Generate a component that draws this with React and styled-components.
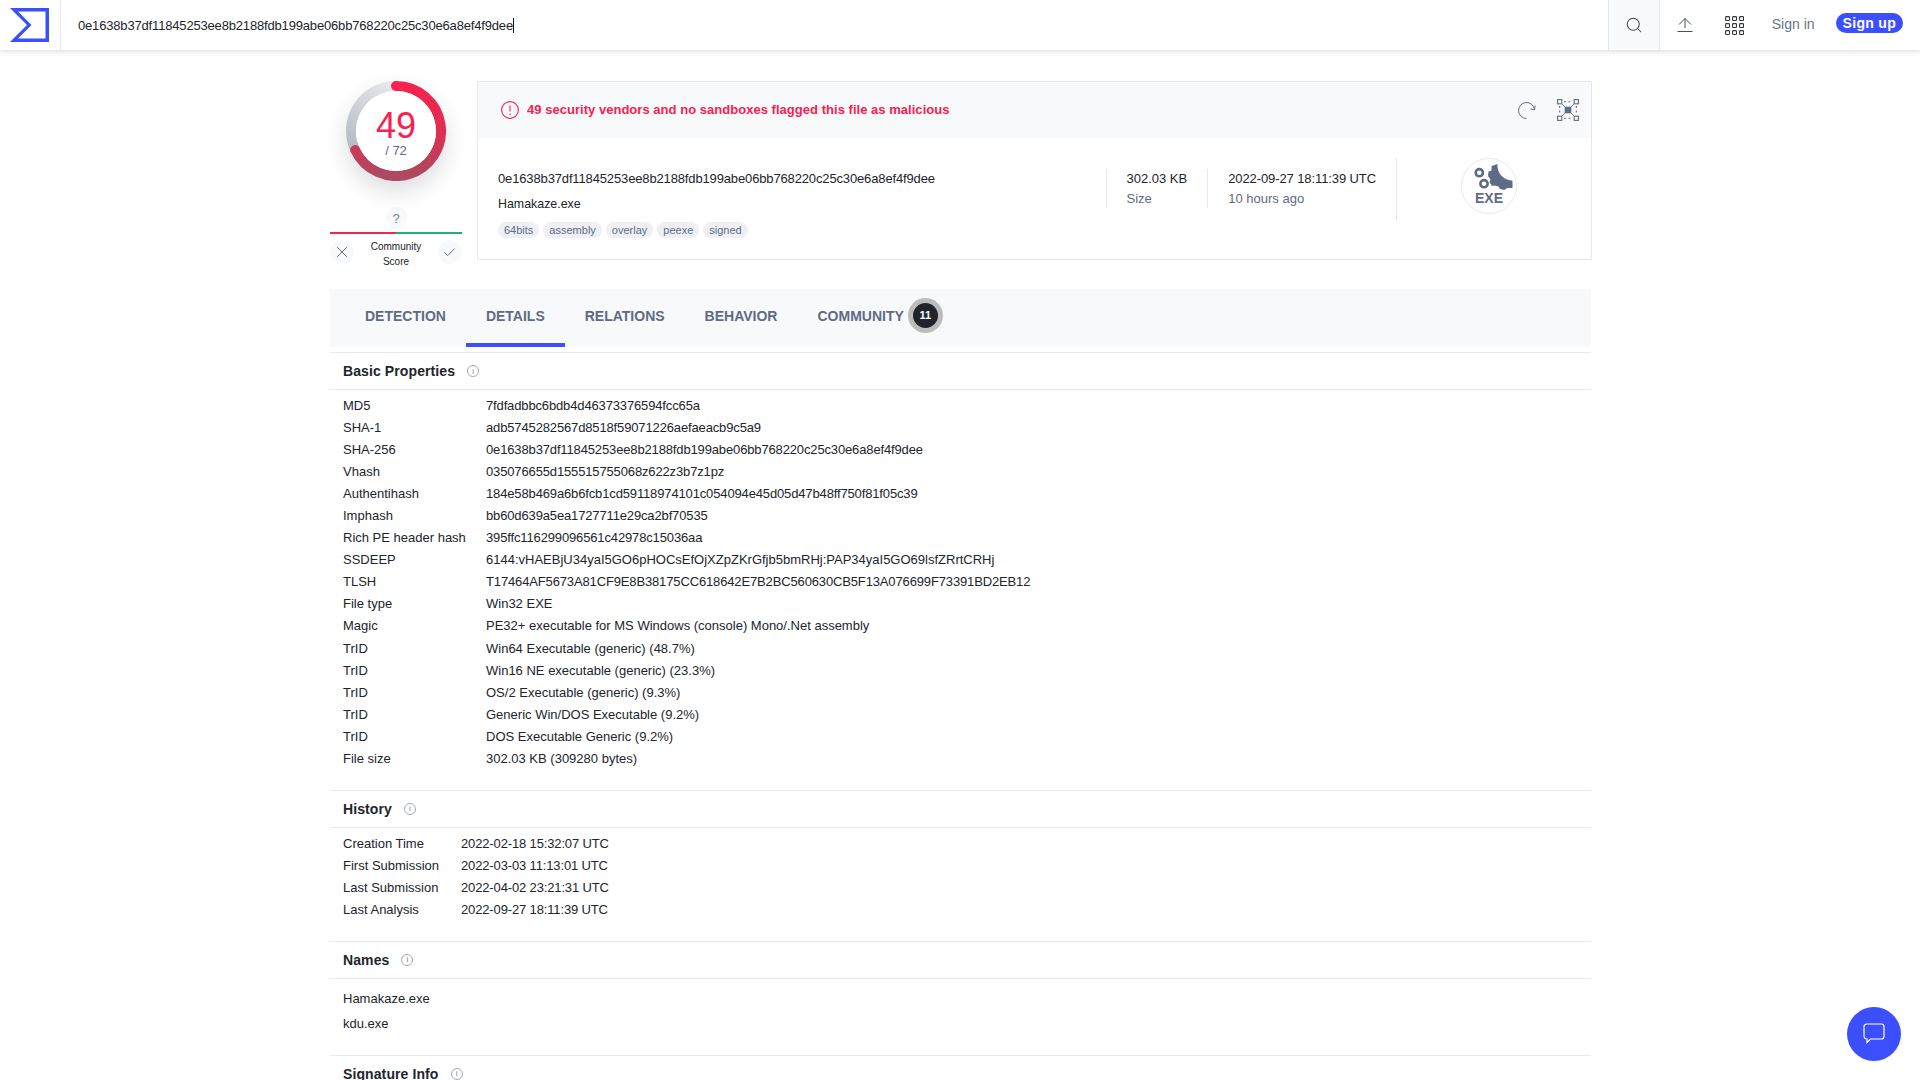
import React from 'react'
import styled, { createGlobalStyle } from 'styled-components'
import { Search, X, Check } from 'lucide-react'

const GlobalStyle = createGlobalStyle`
    html, body {
        margin: 0;
        height: 100%;
        overflow: hidden;
        background: #fff;
    }

    body {
        font-family: "Liberation Sans", Arial, sans-serif;
        font-size: 13px;
        color: #21252b;
    }

    * {
        box-sizing: border-box;
    }
`

const Page = styled.div`
    height: 1080px;
    overflow: hidden;
`

const NavBar = styled.header`
    display: flex;
    align-items: stretch;
    height: 50px;
    background: #fff;
    box-shadow: 0 1px 6px rgba(30, 35, 50, .18);
`

const LogoCell = styled.div`
    display: flex;
    align-items: center;
    width: 61px;
    padding-left: 10px;
    border-right: 1px solid #e6e8ef;
`

const SearchText = styled.div`
    display: flex;
    flex: 1;
    align-items: center;
    padding-left: 17px;
    font-size: 13px;
    letter-spacing: -.17px;
    color: #21252b;
`

const Caret = styled.span`
    display: inline-block;
    width: 1px;
    height: 15px;
    background: #111;
`

const SearchCell = styled.div`
    display: flex;
    align-items: center;
    justify-content: center;
    width: 52px;
    color: #3c4250;
    background: #f8f9fb;
    border-left: 1px solid #e6e8ef;
    border-right: 1px solid #e6e8ef;
`

const NavIcon = styled.div`
    display: flex;
    align-items: center;
    justify-content: center;
    width: 50px;
    color: #4a4f5c;
`

const SignIn = styled.a`
    align-self: center;
    margin: -2px 21px 0 12px;
    font-size: 14px;
    color: #6b7489;
`

const SignUp = styled.a`
    align-self: center;
    margin: -4px 17px 0 0;
    padding: 0 7px;
    height: 20px;
    line-height: 20px;
    border-radius: 10px;
    font-size: 14px;
    font-weight: 700;
    letter-spacing: .3px;
    color: #fff;
    background: #3b4fff;
`

const Main = styled.main`
    width: 1262px;
    margin-left: 330px;
`

const Summary = styled.section`
    display: flex;
    align-items: flex-start;
    gap: 15px;
    margin: 31px 0 18px;
`

const ScoreColumn = styled.div`
    display: flex;
    flex-direction: column;
    align-items: center;
    width: 132px;
    height: 190px;
`

const Gauge = styled.div`
    position: relative;
    width: 100px;
    height: 100px;
    border-radius: 50%;
    box-shadow: 0 10px 22px rgba(40, 45, 60, .16);
`

const GaugeLabel = styled.div`
    position: absolute;
    top: 10px;
    left: 10px;
    display: flex;
    flex-direction: column;
    align-items: center;
    width: 80px;
    height: 80px;
    border-radius: 50%;
    background: #fff;
`

const GaugeValue = styled.div`
    margin-top: 15px;
    font-size: 36px;
    line-height: 40px;
    color: #f6224f;
`

const GaugeTotal = styled.div`
    margin-top: -3px;
    font-size: 13px;
    line-height: 15px;
    color: #5f6b85;
`

const QuestionBubble = styled.div`
    display: flex;
    align-items: center;
    justify-content: center;
    width: 21px;
    height: 22px;
    margin-top: 26px;
    font-size: 13px;
    color: #7b8296;
    background: #f8f9fb;
    border-radius: 50% 50% 50% 50% / 45% 45% 70% 70%;
`

const ScoreLine = styled.div`
    width: 132px;
    height: 2px;
    margin-top: 3px;
    background: linear-gradient(90deg, #f6224f 50%, #21b26f 50%);
`

const VoteRow = styled.div`
    display: flex;
    align-items: flex-start;
    justify-content: space-between;
    width: 132px;
    margin-top: 6px;
`

const VoteButton = styled.div`
    display: flex;
    align-items: center;
    justify-content: center;
    width: 24px;
    height: 24px;
    border-radius: 50%;
    color: #5f6b85;
    background: #f8f9fb;
`

const VoteLabel = styled.div`
    margin-top: -1px;
    font-size: 10px;
    line-height: 15px;
    text-align: center;
    color: #21252b;
`

const Card = styled.div`
    flex: 1;
    height: 179px;
    border: 1px solid #e6e8ef;
`

const CardAlert = styled.div`
    display: flex;
    align-items: center;
    height: 56px;
    padding: 0 12px 0 23px;
    background: #f8f9fb;
`

const AlertText = styled.div`
    flex: 1;
    margin: -1px 0 0 8px;
    font-size: 13px;
    font-weight: 700;
    letter-spacing: .03px;
    color: #f6224f;
`

const AlertTool = styled.div`
    display: flex;
    margin-left: 20px;
    color: #5f6b85;
`

const CardBody = styled.div`
    display: flex;
    align-items: flex-start;
`

const FileInfo = styled.div`
    flex: 1;
    padding: 32px 0 0 20px;
    font-size: 12.4px;
    line-height: 18px;
`

const FileHash = styled.div`
    font-size: 13px;
    letter-spacing: -.14px;
`

const FileName = styled.div`
    margin-top: 7px;
`

const TagRow = styled.div`
    display: flex;
    gap: 4px;
    margin-top: 9px;
`

const Tag = styled.span`
    height: 16px;
    padding: 0 6px;
    border-radius: 8px;
    font-size: 11px;
    line-height: 16px;
    color: #5f6b85;
    background: #eef0f6;
`

const Stat = styled.div`
    height: 39px;
    margin-top: 31px;
    padding: 0 20px;
    border-left: 1px solid #e6e8ef;
    font-size: 13px;
    line-height: 20px;
    letter-spacing: ${props => props.$spacing || 0}px;
    white-space: nowrap;
`

const StatHint = styled.div`
    letter-spacing: 0;
    color: #5f6b85;
`

const FileTypeCell = styled.div`
    display: flex;
    align-self: flex-start;
    height: 62px;
    margin-top: 20px;
    padding-left: 64px;
    padding-right: 74px;
    border-left: 1px solid #e6e8ef;
`

const Tabs = styled.nav`
    display: flex;
    height: 58px;
    margin-right: 1px;
    padding-left: 15px;
    background: #f8f9fb;
`

const Tab = styled.div`
    display: flex;
    align-items: center;
    height: 58px;
    padding: 0 20px;
    border-bottom: 4px solid ${props => props.$active ? '#3b4fff' : 'transparent'};
    font-size: 14px;
    font-weight: 700;
    color: #5f6b85;
`

const CountBadge = styled.span`
    display: flex;
    align-items: center;
    justify-content: center;
    width: 25px;
    height: 25px;
    margin: -2px 0 0 9px;
    border-radius: 50%;
    font-size: 11px;
    font-weight: 700;
    color: #fff;
    background: #21252b;
    box-shadow: 0 0 0 5px #bcbcbc;
`

const Section = styled.section`
    margin-top: ${props => props.$top || 0}px;
    margin-right: 1px;
    padding-bottom: ${props => props.$bottom}px;
    border-top: 1px solid #e9eaee;
`

const SectionHeading = styled.h2`
    display: flex;
    align-items: center;
    gap: 12px;
    height: 37px;
    margin: 0 0 ${props => props.$gap}px;
    padding-left: 13px;
    border-bottom: 1px solid #e9eaee;
    font-size: 14px;
    font-weight: 700;
    letter-spacing: .1px;
    color: #21252b;
`

const InfoMark = styled.span`
    display: inline-flex;
    align-items: center;
    justify-content: center;
    width: 12px;
    height: 12px;
    border: 1px solid #a4a9b5;
    border-radius: 50%;
    font-size: 8px;
    font-weight: 400;
    letter-spacing: 0;
    color: #7b8296;
`

const Row = styled.div`
    display: grid;
    grid-template-columns: ${props => props.$labelWidth}px 1fr;
    padding-left: 13px;
    font-size: 13px;
    line-height: 22.05px;
`

// hex strings and dates run a little tighter than prose
const RowValue = styled.span`
    letter-spacing: ${props => props.$tight ? '-.14px' : '0'};
`

const NameRow = styled.div`
    padding-left: 13px;
    font-size: 13px;
    line-height: 25px;
`

const ChatButton = styled.button`
    position: fixed;
    right: 19px;
    bottom: 19px;
    display: flex;
    align-items: center;
    justify-content: center;
    width: 54px;
    height: 54px;
    border: 0;
    border-radius: 50%;
    color: #fff;
    background: #3b4fff;
`

const HASH = '0e1638b37df11845253ee8b2188fdb199abe06bb768220c25c30e6a8ef4f9dee'

const BASIC_PROPERTIES = [
    ['MD5', '7fdfadbbc6bdb4d46373376594fcc65a', true],
    ['SHA-1', 'adb5745282567d8518f59071226aefaeacb9c5a9', true],
    ['SHA-256', HASH, true],
    ['Vhash', '035076655d155515755068z622z3b7z1pz', true],
    ['Authentihash', '184e58b469a6b6fcb1cd59118974101c054094e45d05d47b48ff750f81f05c39', true],
    ['Imphash', 'bb60d639a5ea1727711e29ca2bf70535', true],
    ['Rich PE header hash', '395ffc116299096561c42978c15036aa', true],
    ['SSDEEP', '6144:vHAEBjU34yaI5GO6pHOCsEfOjXZpZKrGfjb5bmRHj:PAP34yaI5GO69lsfZRrtCRHj'],
    ['TLSH', 'T17464AF5673A81CF9E8B38175CC618642E7B2BC560630CB5F13A076699F73391BD2EB12', true],
    ['File type', 'Win32 EXE'],
    ['Magic', 'PE32+ executable for MS Windows (console) Mono/.Net assembly'],
    ['TrID', 'Win64 Executable (generic) (48.7%)'],
    ['TrID', 'Win16 NE executable (generic) (23.3%)'],
    ['TrID', 'OS/2 Executable (generic) (9.3%)'],
    ['TrID', 'Generic Win/DOS Executable (9.2%)'],
    ['TrID', 'DOS Executable Generic (9.2%)'],
    ['File size', '302.03 KB (309280 bytes)'],
]

const HISTORY = [
    ['Creation Time', '2022-02-18 15:32:07 UTC'],
    ['First Submission', '2022-03-03 11:13:01 UTC'],
    ['Last Submission', '2022-04-02 23:21:31 UTC'],
    ['Last Analysis', '2022-09-27 18:11:39 UTC'],
]

const TAGS = ['64bits', 'assembly', 'overlay', 'peexe', 'signed']
const TABS = ['DETECTION', 'DETAILS', 'RELATIONS', 'BEHAVIOR', 'COMMUNITY']

const Logo = () => (
    <svg width="39" height="34" viewBox="0 0 39 34">
        <path
            fill="#3b4fff"
            fillRule="evenodd"
            d="M0 0H39V34H0L17 17ZM8 3.5 21.5 17 8 30.5H35.5V3.5Z"
        />
    </svg>
)

const UploadIcon = () => (
    <svg width="16" height="16" viewBox="0 0 16 16" fill="none" stroke="currentColor" strokeWidth="1">
        <path d="M8 11V1.5M2 7.5 8 1.5l6 6M.5 14.5h15" />
    </svg>
)

const GridIcon = () => (
    <svg width="19" height="19" viewBox="0 0 19 19" fill="none" stroke="#33373f" strokeWidth="1.1">
        {[0, 7, 14].map(y => [0, 7, 14].map(x => (
            <rect key={`${x}-${y}`} x={x + .6} y={y + .6} width="3.9" height="3.9" rx=".8" />
        )))}
    </svg>
)

const RefreshIcon = () => (
    <svg width="20" height="20" viewBox="0 0 20 20" fill="none" stroke="currentColor" strokeWidth="1">
        <path d="M9.5 18.5A8 8 0 1 1 17.5 9.5M18.2 5.5 17.5 9.8 13.5 9" />
    </svg>
)

const ScanIcon = () => (
    <svg width="22" height="22" viewBox="0 0 22 22" fill="none" stroke="currentColor" strokeWidth="1.1">
        <rect x=".6" y=".6" width="4.2" height="4.2" />
        <rect x="17.2" y=".6" width="4.2" height="4.2" />
        <rect x=".6" y="17.2" width="4.2" height="4.2" />
        <rect x="17.2" y="17.2" width="4.2" height="4.2" />
        <rect x="7.7" y="7.7" width="6.6" height="6.6" fill="currentColor" stroke="none" />
        <path strokeWidth=".8" d="M5 5 8 8M17 5l-3 3M5 17l3-3M17 17l-3-3" />
        <path strokeDasharray="2 2.5" d="M7 2.7h8M7 19.3h8M2.7 7v8M19.3 7v8" />
    </svg>
)

const AlertIcon = () => (
    <svg width="18" height="18" viewBox="0 0 18 18" fill="none" stroke="#f6224f" strokeWidth="1.1">
        <circle cx="9" cy="9" r="8.4" />
        <path d="M9 4.5V10.5M9 12.5V14" />
    </svg>
)

const ChatIcon = () => (
    <svg width="22" height="22" viewBox="0 0 22 22" fill="none" stroke="currentColor" strokeWidth="1.2">
        <path d="M3.5 1h15A2.5 2.5 0 0 1 21 3.5v10a2.5 2.5 0 0 1-2.5 2.5H7.5l-3.5 3.5V16A3 3 0 0 1 1 13.5v-10A2.5 2.5 0 0 1 3.5 1Z" />
    </svg>
)

const ScoreRing = () => (
    <svg width="100" height="100" viewBox="0 0 100 100" fill="none" strokeWidth="10" strokeLinecap="round">
        <defs>
            <linearGradient id="ringRed" gradientUnits="userSpaceOnUse" x1="50" y1="5" x2="50" y2="95">
                <stop offset="0" stopColor="#f6224f" />
                <stop offset=".55" stopColor="#dd2f52" />
                <stop offset="1" stopColor="#ab4a60" />
            </linearGradient>
            <linearGradient id="ringGray" gradientUnits="userSpaceOnUse" x1="50" y1="5" x2="5" y2="65">
                <stop offset="0" stopColor="#e8e9ee" />
                <stop offset="1" stopColor="#b8bbc3" />
            </linearGradient>
        </defs>
        <path stroke="url(#ringGray)" d="M9.2 69A45 45 0 0 1 50 5" strokeLinecap="butt" />
        <path stroke="url(#ringRed)" d="M50 5A45 45 0 1 1 9.2 69" />
    </svg>
)

const ExeBadge = () => (
    <svg width="56" height="56" viewBox="0 0 56 56">
        <circle cx="28" cy="28" r="27.5" fill="#fff" stroke="#e6e8ef" />
        <g fill="none" stroke="#5f6b85" strokeWidth="2.6">
            <circle cx="18.3" cy="14.7" r="3.6" />
            <circle cx="23" cy="25.7" r="3.6" />
        </g>
        <path
            fill="#5f6b85"
            d="M30.5 8 36.5 6A15 15 0 0 0 50.5 22.5L51.5 23 51.5 30 46 30 43.5 32 39 31 37.5 28.5 33.5 27.5 31 28 28.5 24 29.5 21.5 27 18 27.5 13.5 30.5 12.5Z"
        />
        <text x="28" y="45" textAnchor="middle" fontSize="14" fontWeight="700" fill="#5f6b85" fontFamily="Liberation Sans, sans-serif">EXE</text>
    </svg>
)

const SectionTitle = ({ children, gap }) => (
    <SectionHeading $gap={gap}>
        {children}
        <InfoMark>i</InfoMark>
    </SectionHeading>
)

const App = () => {
    return (
        <Page>
            <GlobalStyle />
            <NavBar>
                <LogoCell><Logo /></LogoCell>
                <SearchText>{HASH}<Caret /></SearchText>
                <SearchCell><Search size={18} strokeWidth={1.35} /></SearchCell>
                <NavIcon><UploadIcon /></NavIcon>
                <NavIcon><GridIcon /></NavIcon>
                <SignIn>Sign in</SignIn>
                <SignUp>Sign up</SignUp>
            </NavBar>
            <Main>
                <Summary>
                    <ScoreColumn>
                        <Gauge>
                            <ScoreRing />
                            <GaugeLabel>
                                <GaugeValue>49</GaugeValue>
                                <GaugeTotal>/ 72</GaugeTotal>
                            </GaugeLabel>
                        </Gauge>
                        <QuestionBubble>?</QuestionBubble>
                        <ScoreLine />
                        <VoteRow>
                            <VoteButton><X size={18} strokeWidth={1.3} /></VoteButton>
                            <VoteLabel>Community<br />Score</VoteLabel>
                            <VoteButton><Check size={15} strokeWidth={1.5} /></VoteButton>
                        </VoteRow>
                    </ScoreColumn>
                    <Card>
                        <CardAlert>
                            <AlertIcon />
                            <AlertText>49 security vendors and no sandboxes flagged this file as malicious</AlertText>
                            <AlertTool><RefreshIcon /></AlertTool>
                            <AlertTool><ScanIcon /></AlertTool>
                        </CardAlert>
                        <CardBody>
                            <FileInfo>
                                <FileHash>{HASH}</FileHash>
                                <FileName>Hamakaze.exe</FileName>
                                <TagRow>
                                    {TAGS.map(tag => <Tag key={tag}>{tag}</Tag>)}
                                </TagRow>
                            </FileInfo>
                            <Stat>
                                302.03 KB
                                <StatHint>Size</StatHint>
                            </Stat>
                            <Stat $spacing={-.1}>
                                2022-09-27 18:11:39 UTC
                                <StatHint>10 hours ago</StatHint>
                            </Stat>
                            <FileTypeCell><ExeBadge /></FileTypeCell>
                        </CardBody>
                    </Card>
                </Summary>
                <Tabs>
                    {TABS.map(tab => (
                        <Tab key={tab} $active={tab === 'DETAILS'}>
                            {tab}
                            {tab === 'COMMUNITY' && <CountBadge>11</CountBadge>}
                        </Tab>
                    ))}
                </Tabs>
                <Section $top={5} $bottom={20}>
                    <SectionTitle gap={5}>Basic Properties</SectionTitle>
                    {BASIC_PROPERTIES.map(([label, value, tight], i) => (
                        <Row key={i} $labelWidth={143}>
                            <span>{label}</span>
                            <RowValue $tight={tight}>{value}</RowValue>
                        </Row>
                    ))}
                </Section>
                <Section $bottom={20}>
                    <SectionTitle gap={5}>History</SectionTitle>
                    {HISTORY.map(([label, value]) => (
                        <Row key={label} $labelWidth={118}>
                            <span>{label}</span>
                            <RowValue $tight>{value}</RowValue>
                        </Row>
                    ))}
                </Section>
                <Section $bottom={19}>
                    <SectionTitle gap={7}>Names</SectionTitle>
                    <NameRow>Hamakaze.exe</NameRow>
                    <NameRow>kdu.exe</NameRow>
                </Section>
                <Section $bottom={20}>
                    <SectionTitle gap={4}>Signature Info</SectionTitle>
                </Section>
            </Main>
            <ChatButton><ChatIcon /></ChatButton>
        </Page>
    )
}

export default App
